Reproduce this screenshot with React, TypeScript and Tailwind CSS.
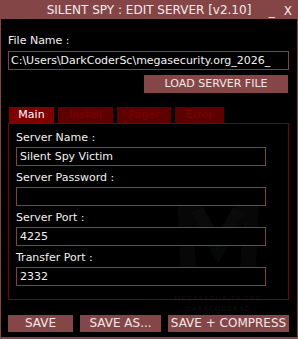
import React from 'react';

const font = { fontFamily: '"DejaVu Sans", Verdana, sans-serif' };

function Field({ label, value }: { label: string; value: string }) {
  return (
    <div className="flex flex-col">
      <div className="text-[11px] leading-[13px] text-[#f2f2f2]">{label}</div>
      <div className="mt-[3px] mb-[5px] h-[19px] w-[250px] border border-[#7e4242] bg-black px-[3px] text-[11px] leading-[17px] text-[#f2f2f2]">
        {value}
      </div>
    </div>
  );
}

export default function App() {
  const tabs = [
    { name: 'Main', w: 'w-[45px]', active: true },
    { name: 'Install', w: 'w-[55px]' },
    { name: 'Pager', w: 'w-[54px]' },
    { name: 'Error', w: 'w-[49px]' },
  ];

  return (
    <div style={font} className="flex h-[339px] w-[298px] flex-col bg-[#834545] px-px pb-[2px] select-none">
      {/* Title bar */}
      <div className="relative flex h-[19px] items-center justify-center text-[12px] text-[#f7ecec]">
        <span className="pt-px">SILENT SPY : EDIT SERVER [v2.10]</span>
        <div className="absolute right-[5px] top-[2px] flex gap-[9px] text-[12px]">
          <span>_</span>
          <span>X</span>
        </div>
      </div>

      {/* Content */}
      <div className="relative flex flex-1 flex-col bg-black px-[7px]">
        {/* faint watermark */}
        <div className="pointer-events-none absolute left-[172px] top-[174px] flex flex-col items-center">
          <svg width="90" height="92" viewBox="0 0 90 92">
            <polygon points="4,8 22,0 45,40 68,0 86,8 82,90 66,90 70,30 45,70 20,30 24,90 8,90" fill="#070707" />
            <polygon points="18,20 30,14 45,44 60,14 72,20 45,58" fill="#0a0a0a" />
          </svg>
          <div className="mt-[10px] text-[7px] leading-[8px] tracking-[1px] text-[#0e0e0e]">MEGASECURITY.ORG</div>
          <div className="mt-[2px] text-[7px] leading-[8px] tracking-[1px] text-[#0e0e0e]">DARKCODERSC</div>
        </div>

        <div className="relative mt-[15px] text-[11px] leading-[13px] text-[#f2f2f2]">File Name :</div>
        <div className="relative mt-[4px] h-[19px] w-[281px] overflow-hidden whitespace-nowrap border border-[#7e4242] bg-black px-[2px] text-[11px] leading-[17px] text-[#f2f2f2]">
          C:\Users\DarkCoderSc\megasecurity.org_2026_
        </div>
        <button className="relative ml-[136px] mt-[5px] h-[18px] w-[144px] bg-[#844646] text-[11px] leading-[18px] text-[#f6e6e6]">
          LOAD SERVER FILE
        </button>

        {/* Tabs */}
        <div className="relative ml-px mt-[14px] flex h-[16px] gap-[4px]">
          {tabs.map((t) => (
            <div
              key={t.name}
              className={`${t.w} h-[16px] text-center text-[11px] leading-[16px] ${
                t.active ? 'bg-[#800000] text-white' : 'bg-[#5e0000] text-[#7c0000]'
              }`}
            >
              {t.name}
            </div>
          ))}
        </div>

        {/* Panel */}
        <div className="relative flex h-[177px] w-[281px] flex-col border border-[#800000] px-[7px] pt-[7px]">
          <Field label="Server Name :" value="Silent Spy Victim" />
          <Field label="Server Password :" value="" />
          <Field label="Server Port :" value="4225" />
          <Field label="Transfer Port :" value="2332" />
        </div>

        {/* Bottom buttons */}
        <div className="relative mt-[15px] flex h-[17px] gap-[7px] text-[12px] leading-[17px] text-[#f6e6e6]">
          <button className="h-[17px] w-[65px] bg-[#844646]">SAVE</button>
          <button className="h-[17px] w-[81px] bg-[#844646]">SAVE AS...</button>
          <button className="h-[17px] w-[121px] bg-[#844646]">SAVE + COMPRESS</button>
        </div>
      </div>
    </div>
  );
}
